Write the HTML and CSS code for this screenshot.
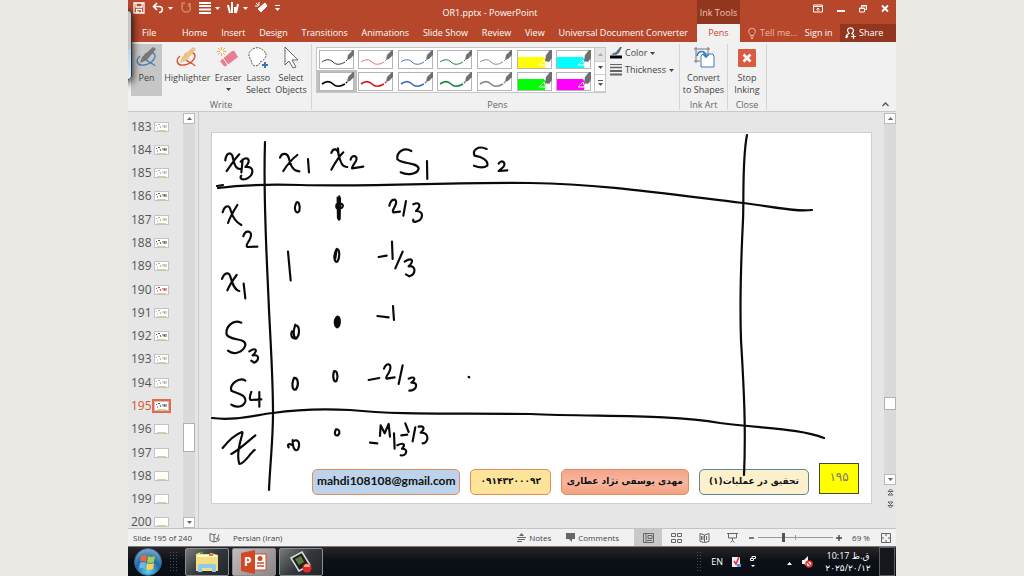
FILE: index.html
```html
<!DOCTYPE html>
<html lang="en">
<head>
<meta charset="utf-8">
<title>OR1.pptx - PowerPoint</title>
<link rel="stylesheet" href="styles.css">
</head>
<body>
<svg class="defs" aria-hidden="true">
  <symbol id="pen" viewBox="0 0 36 19">
    <rect x=".5" y=".5" width="34" height="18" fill="#fff" stroke="#b5b5b5"/>
    <path d="M3 12c4-3 8-3 11 0s7 3 12 0M27 11l1-1" fill="none" stroke="currentColor"/>
    <path d="M28 10l1-5 5-5h1v5l-4 4z" fill="#6f6f6f"/>
  </symbol>
  <symbol id="pen-bold" viewBox="0 0 36 19">
    <rect x=".5" y=".5" width="34" height="18" fill="#fff" stroke="#b5b5b5"/>
    <path d="M3 12c4-3 8-3 11 0s7 3 12 0M27 11l1-1" fill="none" stroke="currentColor" stroke-width="1.6"/>
    <path d="M28 10l1-5 5-5h1v5l-4 4z" fill="#6f6f6f"/>
  </symbol>
  <symbol id="marker" viewBox="0 0 36 19">
    <rect x=".5" y=".5" width="34" height="18" fill="#fff" stroke="#b5b5b5"/>
    <path d="M1 7h26l2 4-1 7H1z" fill="currentColor"/>
    <path d="M28 11l1-6 4-5h2v8l-3 4z" fill="#6f6f6f"/>
    <path d="M22 15l5-5 2 5z" fill="none" stroke="#fff"/>
  </symbol>
  <symbol id="thumb" viewBox="0 0 15 10">
    <rect x=".5" y=".5" width="14" height="9" fill="#fff" stroke="#c3c3c3"/>
    <path d="M3 8.500h9" stroke="#d8d29a" fill="none"/>
  </symbol>
  <symbol id="thumb-ink" viewBox="0 0 15 10">
    <rect x=".5" y=".5" width="14" height="9" fill="#fff" stroke="#c3c3c3"/>
    <path d="M2 3l1 1M4 2.500h2M3 6h1M6 4l1 2M9 3v2M10 6l1-3M12 3v3" stroke="currentColor" fill="none"/>
    <path d="M3 8.500h9" stroke="#d8d29a" fill="none"/>
  </symbol>
  <symbol id="down" viewBox="0 0 5 3"><path d="M0 0h5L2.500 3z" fill="currentColor"/></symbol>
  <symbol id="up" viewBox="0 0 5 3"><path d="M0 3h5L2.500 0z" fill="currentColor"/></symbol>
</svg>

<main class="app">
  <div class="peek"></div>
  <header class="header">
    <div class="titlebar">
      <div class="quick">
        <button aria-label="Save"><svg width="12" height="12" viewBox="0 0 12 12"><path d="M1 1h10v10H1zM3 1v4h6V1M3.500 11V7.500h5V11M5 9v2" fill="none" stroke="#fff" stroke-width="1.300"/></svg></button>
        <button aria-label="Undo"><svg width="12" height="12" viewBox="0 0 12 12"><path d="M5 1L1.500 4.500 5 8M2 4.500h5c5 0 4 6 0 6" fill="none" stroke="#fff" stroke-width="1.600"/></svg><svg class="dd"><use href="#down"/></svg></button>
        <button aria-label="Redo" class="dim"><svg width="12" height="12" viewBox="0 0 12 12"><path d="M3 3a4.300 4.300 0 1 0 5-1M5 1H1.500M2 1v4M9 5V2h2" fill="none" stroke="#d98b76" stroke-width="1.300"/></svg></button>
        <button aria-label="Thickness"><svg width="12" height="12" viewBox="0 0 12 12"><path d="M0 1h12M0 4h12M0 7.500h12M0 11h12" stroke="#fff" stroke-width="1.800"/></svg><svg class="dd"><use href="#down"/></svg></button>
        <button aria-label="Pens"><svg width="12" height="12" viewBox="0 0 12 12"><path d="M1 3l2 8M5 0v11M8 5v6M11 2L9 11" stroke="#fff" stroke-width="2"/></svg><svg class="dd"><use href="#down"/></svg></button>
        <button aria-label="Eraser"><svg width="13" height="12" viewBox="0 0 13 12"><path d="M3 7l7-6 2 3-6 6zM1 1l3 3M4 0v3M0 4h3" fill="#fff" stroke="#fff"/></svg></button>
        <button aria-label="Customize"><svg width="5" height="6" viewBox="0 0 5 6"><path d="M0 .5h5" stroke="#fff"/><path d="M0 3h5L2.500 6z" fill="#fff"/></svg></button>
      </div>
      <h1 class="title">OR1.pptx - PowerPoint</h1>
    </div>
    <div class="inktools">Ink Tools</div>
    <div class="wincontrols">
      <button aria-label="Ribbon display"><svg width="10" height="9" viewBox="0 0 10 9"><path d="M.5 1h9v7h-9zM.5 2.500h9M5 7V4M3.500 5.500L5 4l1.500 1.500" fill="none" stroke="#fff"/></svg></button>
      <button aria-label="Minimize"><svg width="8" height="9" viewBox="0 0 8 9"><path d="M0 7h8" stroke="#fff" stroke-width="2"/></svg></button>
      <button aria-label="Restore"><svg width="8" height="9" viewBox="0 0 8 9"><path d="M.5 4h5v4h-5zM2.500 3.500v-2h5v4h-2M.5 4.500h5M2.500 2h5" fill="none" stroke="#fff"/></svg></button>
      <button aria-label="Close"><svg width="8" height="9" viewBox="0 0 8 9"><path d="M1 1.500l6 6M7 1.500l-6 6" stroke="#fff" stroke-width="1.800"/></svg></button>
    </div>
    <nav class="tabs">
      <a href="#file" class="file">File</a><a href="#home">Home</a><a href="#insert">Insert</a><a href="#design">Design</a><a href="#transitions">Transitions</a><a href="#animations">Animations</a><a href="#slideshow">Slide Show</a><a href="#review">Review</a><a href="#view">View</a><a href="#udc">Universal Document Converter</a>
    </nav>
    <a href="#pens" class="tab-active">Pens</a>
    <div class="account">
      <button class="tell"><svg width="8" height="11" viewBox="0 0 8 11"><path d="M2.500 7.500C2.500 6 .6 5.500.6 3.600a3.400 3.400 0 0 1 6.800 0C7.400 5.500 5.500 6 5.500 7.500zM2.500 9h3M3 10.500h2" fill="none" stroke="#efb5a5"/></svg>Tell me...</button>
      <a href="#signin">Sign in</a>
      <button class="share"><svg width="12" height="12" viewBox="0 0 12 12"><path d="M1 11c0-3 1.500-4 3-4.500C1 3 3 .8 5.500.8S10 4 7 6.500l2 1.500M6 9.500h5M8.500 7v5M1 11l2-2" fill="none" stroke="#fff" stroke-width="1.200"/></svg>Share</button>
    </div>
  </header>

  <section class="ribbon" aria-label="Pens ribbon">
    <div class="group write">
      <div class="tools">
        <button class="tool on"><svg width="22" height="24" viewBox="0 0 22 24"><path d="M4 10c-5 4-3 10 4 9 9-1 14-10 9-12-5-1-10 1-8 5 2 5 9 5 10 8" fill="none" stroke="#4a7fba" stroke-width="1.400"/><path d="M4 17l2-6L17 1l3 2-9 11z" fill="#777"/></svg>Pen</button>
        <button class="tool"><svg width="22" height="24" viewBox="0 0 22 24"><path d="M4 10c-5 4-3 10 4 9 9-1 14-10 9-12-5-1-10 1-8 5 2 5 9 5 10 8" fill="none" stroke="#d9532f" stroke-width="1.400"/><path d="M4 17l2-6L17 1l3 2-9 11z" fill="#ecc386"/></svg>Highlighter</button>
        <button class="tool"><svg width="24" height="24" viewBox="0 0 24 24"><path d="M4 15l12-10q2-1 3 1l3 5-12 9q-2 1-3-1z" fill="#e77f93"/><path d="M7 12l5 7" stroke="#fff"/><path d="M5.500 1v9M1 5.500h9M2 2l7 7M9 2L2 9" stroke="#e9b04b"/><circle cx="5.500" cy="5.500" r="1.500" fill="#fff"/></svg>Eraser<svg class="dd"><use href="#down"/></svg></button>
        <button class="tool"><svg width="22" height="24" viewBox="0 0 22 24"><path d="M6 3q5-3 10 1 5 4 2 8-2 3-5 4-1 4-5 4c-4-1-3-4-4-6Q-1 7 6 3z" fill="#fff" stroke="#555" stroke-dasharray="2 1"/><path d="M18 16v6M15 19h6" stroke="#3f75b5" stroke-width="2"/></svg>Lasso<br>Select</button>
        <button class="tool"><svg width="22" height="24" viewBox="0 0 22 24"><path d="M5 1v18l4-4 4 7 3-1-4-7h6z" fill="#fff" stroke="#666"/></svg>Select<br>Objects</button>
      </div>
      <div class="caption">Write</div>
    </div>
    <div class="group pens">
      <div class="tools">
        <div class="gallery">
          <div class="cells">
            <button aria-label="Black pen"><svg class="c-ink"><use href="#pen"/></svg></button>
            <button aria-label="Red pen"><svg class="c-rose"><use href="#pen"/></svg></button>
            <button aria-label="Blue pen"><svg class="c-blue"><use href="#pen"/></svg></button>
            <button aria-label="Green pen"><svg class="c-green"><use href="#pen"/></svg></button>
            <button aria-label="Gray pen"><svg class="c-gray"><use href="#pen"/></svg></button>
            <button aria-label="Yellow highlighter"><svg class="c-yellow"><use href="#marker"/></svg></button>
            <button aria-label="Cyan highlighter"><svg class="c-cyan"><use href="#marker"/></svg></button>
            <button aria-label="Bold black pen" class="chosen"><svg class="c-black"><use href="#pen-bold"/></svg></button>
            <button aria-label="Bold red pen"><svg class="c-red"><use href="#pen-bold"/></svg></button>
            <button aria-label="Bold blue pen"><svg class="c-blue"><use href="#pen-bold"/></svg></button>
            <button aria-label="Bold green pen"><svg class="c-green"><use href="#pen-bold"/></svg></button>
            <button aria-label="Bold gray pen"><svg class="c-gray"><use href="#pen-bold"/></svg></button>
            <button aria-label="Green highlighter"><svg class="c-lime"><use href="#marker"/></svg></button>
            <button aria-label="Magenta highlighter"><svg class="c-magenta"><use href="#marker"/></svg></button>
          </div>
          <div class="spin">
            <button aria-label="Previous row" class="off"><svg class="dd"><use href="#up"/></svg></button>
            <button aria-label="Next row"><svg class="dd"><use href="#down"/></svg></button>
            <button aria-label="More pens"><svg width="5" height="6" viewBox="0 0 5 6"><path d="M0 .5h5" stroke="#555"/><path d="M0 3h5L2.500 6z" fill="#555"/></svg></button>
          </div>
        </div>
        <div class="options">
          <button><svg width="12" height="12" viewBox="0 0 12 12"><path d="M2 7l4-2 4-5h2L9 6 6 8z" fill="#5d6f80"/><path d="M1 7l4-1-1 2z" fill="#3c7bc0"/><path d="M0 10h12" stroke="#000" stroke-width="3"/></svg>Color<svg class="dd"><use href="#down"/></svg></button>
          <button><svg width="12" height="12" viewBox="0 0 12 12"><path d="M0 .5h12" stroke="#666"/><path d="M0 3.500h12" stroke="#666" stroke-width="1.500"/><path d="M0 7h12M0 10.500h12" stroke="#666" stroke-width="2.200"/></svg>Thickness<svg class="dd"><use href="#down"/></svg></button>
        </div>
      </div>
      <div class="caption">Pens</div>
    </div>
    <div class="group art">
      <div class="tools">
        <button class="tool"><svg width="22" height="24" viewBox="0 0 22 24"><path d="M3 1v16M1 3h16M15 1v6M1 15h6" stroke="#777" fill="none"/><path d="M10 8h10l1 3v10H8V10z" fill="#fff" stroke="#3c7bc0"/><path d="M4 10c1-6 8-6 9 0M10 8l3 3 3-3" fill="none" stroke="#3c7bc0" stroke-width="1.600"/></svg>Convert<br>to Shapes</button>
      </div>
      <div class="caption">Ink Art</div>
    </div>
    <div class="group close">
      <div class="tools">
        <button class="tool"><svg width="22" height="24" viewBox="0 0 22 24"><rect x="2" y="3" width="18" height="18" rx="1" fill="#dc5b40"/><path d="M7.500 8.500l7 7M14.500 8.500l-7 7" stroke="#fff" stroke-width="2.600"/></svg>Stop<br>Inking</button>
      </div>
      <div class="caption">Close</div>
    </div>
    <button class="collapse" aria-label="Collapse ribbon"><svg width="7" height="5" viewBox="0 0 7 5"><path d="M.5 4l3-3 3 3" fill="none" stroke="#555" stroke-width="1.400"/></svg></button>
  </section>

  <section class="workspace">
    <div class="outline">
      <ol class="thumbs">
        <li>183<svg><use href="#thumb-ink"/></svg></li>
        <li>184<svg class="dark"><use href="#thumb-ink"/></svg></li>
        <li>185<svg><use href="#thumb-ink"/></svg></li>
        <li>186<svg class="dark"><use href="#thumb-ink"/></svg></li>
        <li>187<svg><use href="#thumb-ink"/></svg></li>
        <li>188<svg class="dark"><use href="#thumb-ink"/></svg></li>
        <li>189<svg><use href="#thumb-ink"/></svg></li>
        <li>190<svg class="warm"><use href="#thumb-ink"/></svg></li>
        <li>191<svg><use href="#thumb-ink"/></svg></li>
        <li>192<svg class="dark"><use href="#thumb-ink"/></svg></li>
        <li>193<svg><use href="#thumb-ink"/></svg></li>
        <li>194<svg><use href="#thumb-ink"/></svg></li>
        <li class="current">195<svg class="dark"><use href="#thumb-ink"/></svg></li>
        <li>196<svg><use href="#thumb"/></svg></li>
        <li>197<svg><use href="#thumb"/></svg></li>
        <li>198<svg><use href="#thumb"/></svg></li>
        <li>199<svg><use href="#thumb"/></svg></li>
        <li>200<svg><use href="#thumb"/></svg></li>
      </ol>
    </div>
    <div class="scroll">
      <button aria-label="Scroll up"><svg class="dd"><use href="#up"/></svg></button>
      <div class="track"><span class="above-list"></span><span class="handle tall"></span></div>
      <button aria-label="Scroll down"><svg class="dd"><use href="#down"/></svg></button>
    </div>
    <div class="stage">
      <article class="slide">
        <footer class="labels">
          <span class="pill mail">mahdi108108@gmail.com</span>
          <span class="pill phone" lang="fa">۰۹۱۴۳۲۰۰۰۹۲</span>
          <span class="pill author" lang="fa" dir="rtl">مهدی یوسفی نژاد عطاری</span>
          <span class="pill course" lang="fa" dir="rtl">تحقیق در عملیات(۱)</span>
          <span class="number" lang="fa">۱۹۵</span>
        </footer>
        <svg class="ink" viewBox="211 132 661 372" role="img" aria-label="Handwritten simplex table">
          <g stroke-width="2.200">
            <path d="M265 142C263 200 267 260 269 310C271 350 273 380 273 413C273 440 270 465 269 490"/>
            <path d="M217 186l6-1M218 188C240 185 262 184 300 185C380 187 450 182 530 183C600 184 660 193 743 203C775 207 795 212 812 210"/>
            <path d="M747 135C742 160 744 200 743 220C741 260 740 310 741 340C744 390 746 430 744 475"/>
            <path d="M212 418C235 421 255 415 273 413C300 409 330 409 350 410C400 415 450 413 530 414C600 417 670 414 720 423C770 429 800 429 824 438"/>
          </g>
          <g transform="translate(200 125) scale(.3333)" stroke-width="6.500">
            <path d="M76 106C78 84 92 80 97 92C102 110 104 134 122 132M118 88C106 100 92 122 80 138"/>
            <path d="M128 104L124 142M122 110C140 88 158 106 136 126C166 122 162 152 138 162C124 166 118 158 124 152"/>
            <path d="M240 98C246 82 262 84 266 98C272 118 276 138 298 139M292 90C276 102 260 122 250 138M324 102L327 142"/>
            <path d="M394 84C400 66 414 72 416 88C420 110 426 128 442 126M430 82C416 96 404 116 394 134M414 70L416 92M452 104C454 88 476 90 468 108C462 118 454 128 456 130L490 125"/>
            <path d="M634 78C612 66 590 80 592 102C600 118 656 110 656 132C650 148 622 152 602 142M681 108L682 162"/>
            <path d="M860 72C834 60 816 76 824 92C846 96 866 106 862 122C848 132 832 126 822 122M896 116C906 100 920 116 910 126L896 138L922 136"/>
            <path d="M68 262C74 240 88 238 92 256C98 278 108 292 124 300M112 240C102 256 90 276 84 294M130 334C136 312 158 318 152 336C148 352 134 360 142 366L172 365"/>
            <path d="M290 232C278 254 290 270 298 258C302 238 294 228 290 232M418 214L417 284"/>
            <path d="M413 218L414 280M420 220L419 282M410 238C406 250 414 256 426 248C432 240 426 232 412 238"/>
            <path d="M568 242C574 218 592 220 588 236C584 250 574 258 580 262L600 260M618 228L610 272M640 238C658 230 666 240 648 258C676 258 668 286 648 290C640 292 638 288 640 284"/>
            <path d="M264 380L272 466M410 372C398 394 404 414 412 410C420 398 420 372 410 372L406 400"/>
            <path d="M536 396L560 392M576 350L578 402M608 380L586 430M614 410C636 396 644 406 626 424C650 420 648 448 628 454L618 448"/>
            <path d="M66 462C74 440 88 440 92 458C98 478 104 496 118 498M110 450C98 466 88 482 82 496M131 476L136 520"/>
          </g>
          <g transform="translate(200 300) scale(.3333)" stroke-width="6.500">
            <path d="M124 68C98 56 76 82 80 104C92 124 138 112 136 136C130 158 100 166 84 152M148 154C166 142 176 150 158 166C180 162 178 182 162 188L154 182"/>
            <path d="M286 74C280 92 278 108 288 116C300 106 300 78 288 76M276 94C270 106 276 116 288 116M412 50C400 60 404 80 412 82C422 76 422 52 412 50L408 74M414 54L412 78"/>
            <path d="M532 48L566 52M579 18L582 60"/>
            <path d="M136 242C118 230 88 252 94 272C110 280 140 284 136 304C130 322 108 324 94 314M154 276C148 292 148 300 154 300L184 298M178 276L178 320"/>
            <path d="M282 234C272 258 280 274 288 268C298 254 294 232 282 234M402 214C396 236 404 250 410 242C416 226 410 210 402 214"/>
            <path d="M506 240L538 234M552 206C560 186 576 190 570 210C566 224 554 232 560 236L584 232M608 196L596 252M626 236C646 228 648 238 634 248C658 246 650 272 628 272"/>
            <path d="M806 231L808 232M68 444C84 424 104 404 126 396C134 396 104 450 118 492C134 492 148 462 164 450M94 462C120 448 144 424 166 406"/>
            <path d="M278 420C278 446 286 456 294 448C302 430 294 414 280 424M278 436C264 428 262 436 266 442M408 388C402 400 404 408 414 406C422 398 418 386 408 388"/>
            <path d="M510 428L532 430M540 408L542 376L554 400L566 372L570 410M582 400L584 446M592 436C612 426 618 434 606 446C628 446 618 470 602 466M604 406L622 404M616 370L626 396M646 382L638 424M656 380C672 376 676 386 662 398C690 396 686 430 668 430"/>
          </g>
        </svg>
      </article>
    </div>
    <div class="scroll right">
      <button aria-label="Scroll up"><svg class="dd"><use href="#up"/></svg></button>
      <div class="track"><span class="above-slide"></span><span class="handle"></span></div>
      <button aria-label="Scroll down"><svg class="dd"><use href="#down"/></svg></button>
      <button class="jump" aria-label="Previous slide"><svg width="7" height="8" viewBox="0 0 7 8"><path d="M1 3.500L3.500 1 6 3.500zM1 7l2.500-2.500L6 7z" stroke="#666" fill="none"/></svg></button>
      <button class="jump" aria-label="Next slide"><svg width="7" height="8" viewBox="0 0 7 8"><path d="M1 1l2.500 2.500L6 1zM1 4.500L3.500 7 6 4.500z" stroke="#666" fill="none"/></svg></button>
    </div>
  </section>

  <footer class="status">
    <span>Slide 195 of 240</span>
    <button class="proof" aria-label="Spelling"><svg width="11" height="10" viewBox="0 0 11 10"><path d="M5 2L1 .5v7L5 9l5-1.500V5M5 2v7M5 2l2-1M6.500 4.500l1.500 2 2-5" fill="none" stroke="#666"/></svg></button>
    <span>Persian (Iran)</span>
    <div class="right-tools">
      <button class="notes"><svg width="9" height="9" viewBox="0 0 9 9"><path d="M0 4.500h9M1 6.500h7M0 8.500h5" stroke="#666"/><path d="M2 3h5L4.500 0z" fill="#666"/></svg>Notes</button>
      <button class="comments"><svg width="9" height="9" viewBox="0 0 9 9"><path d="M0 0h9v6H6v3L3 6H0z" fill="#666"/></svg>Comments</button>
      <div class="views">
        <button class="on" aria-label="Normal"><svg width="11" height="10" viewBox="0 0 11 10"><path d="M.5.5h10v9H.5zM3 .5v9M5 2.500h4v3H5zM4 7.500h5" fill="none" stroke="#666"/></svg></button>
        <button aria-label="Slide sorter"><svg width="11" height="10" viewBox="0 0 11 10"><path d="M.5.5h4v3h-4zM6.500.5h4v3h-4zM.5 6.500h4v3h-4zM6.500 6.500h4v3h-4z" fill="none" stroke="#666"/></svg></button>
        <button aria-label="Reading view"><svg width="11" height="10" viewBox="0 0 11 10"><path d="M5.500 2L1 .5v8l4.500 1 4.500-1v-8zM5.500 2v7M2.500 3v4M4 3v4M7.500 3v4" fill="none" stroke="#666"/></svg></button>
        <button aria-label="Slide show"><svg width="11" height="10" viewBox="0 0 11 10"><path d="M0 .5h11M1.500 1v4h8V1M5.500 5v3M3.500 9.500l2-2 2 2" fill="none" stroke="#666"/></svg></button>
      </div>
      <button class="step" aria-label="Zoom out"><svg width="6" height="6" viewBox="0 0 6 6"><path d="M0 3h5" stroke="#444" stroke-width="1.400"/></svg></button>
      <input type="range" class="zoom" min="0" max="100" value="33" aria-label="Zoom">
      <button class="step" aria-label="Zoom in"><svg width="6" height="6" viewBox="0 0 6 6"><path d="M0 3h6M3 0v6" stroke="#444" stroke-width="1.400"/></svg></button>
      <span class="percent">69 %</span>
      <button class="fit" aria-label="Fit slide"><svg width="10" height="10" viewBox="0 0 10 10"><path d="M.5.5h9v9h-9zM5 0v3M5 7v3M0 5h3M7 5h3" fill="none" stroke="#666"/></svg></button>
    </div>
  </footer>

  <footer class="taskbar">
    <button class="start" aria-label="Start"><svg width="28" height="28" viewBox="0 0 28 28"><defs><radialGradient id="orb" cx=".5" cy=".85" r=".9"><stop offset="0" stop-color="#5fd0f5"/><stop offset=".5" stop-color="#1e6aa8"/><stop offset="1" stop-color="#8fb7d0"/></radialGradient></defs><circle cx="14" cy="14" r="13.500" fill="url(#orb)" stroke="#35607c"/><path d="M7 8q3-2 6 0l-1 6q-3-2-6 0z" fill="#f0653a"/><path d="M14 8q3 2 7 0l-1 6q-4 2-7 0z" fill="#a5cf4c"/><path d="M6 15q3-2 6 0l-1 6q-3-2-6 0z" fill="#6db5ea"/><path d="M13 15q3 2 7 0l-1 6q-4 2-7 0z" fill="#fbd34e"/></svg></button>
    <span class="grip"></span>
    <button class="task" aria-label="Explorer"><svg width="26" height="22" viewBox="0 0 26 22"><path d="M2 3l5-2 2 2h6l2-1 7 2v16H2z" fill="#f3dd83"/><path d="M3 5h20" stroke="#fff6c8" stroke-width="2"/><path d="M6 2h3" stroke="#4aa04a" stroke-width="2"/><path d="M15 4h4" stroke="#d66" stroke-width="2"/><path d="M4 21v-6q0-2 2-2h14q2 0 2 2v6h-4v-4H8v4z" fill="#8cc8ef"/></svg></button>
    <button class="task lit" aria-label="PowerPoint"><svg width="28" height="24" viewBox="0 0 28 24"><path d="M13 4h13v16H13z" fill="#fff" stroke="#d24726"/><path d="M17 13h7M17 16h7" stroke="#d24726" stroke-width="1.500"/><circle cx="20" cy="8.500" r="2.500" fill="#d24726"/><path d="M1 3l14-3v24L1 21z" fill="#d24726"/><text x="4" y="16" class="ppt">P</text></svg></button>
    <button class="task" aria-label="Screen recorder"><svg width="24" height="24" viewBox="0 0 24 24"><path d="M2 8l11-6 8 13-11 6z" fill="#222" stroke="#ddd" stroke-width="1.500"/><path d="M6 9l6-3 3 6-5 3z" fill="#557a3c"/><circle cx="18" cy="18" r="4.500" fill="#e02a20"/><path d="M15 17a3 3 0 0 1 6 0z" fill="#f4a8a0"/></svg></button>
    <div class="tray">
      <span class="grip"></span>
      <span class="lang">EN</span>
      <svg width="9" height="11" viewBox="0 0 9 11"><path d="M0 1h8v10H0z" fill="#eaf0f8"/><path d="M5 8h4v3H5z" fill="#5b8fd0"/><path d="M2 5l2 3 3-7" fill="none" stroke="#d33" stroke-width="1.600"/></svg>
      <svg width="6" height="12" viewBox="0 0 6 12"><path d="M.5 2.500h3v2h-3zM2 2V.5h3.500v2H4" fill="none" stroke="#fff"/><path d="M1 9h4l-2 2z" fill="#fff"/></svg>
      <svg class="tray-up" width="5" height="3"><use href="#up"/></svg>
      <svg width="12" height="12" viewBox="0 0 12 12"><path d="M1 4h2l4-4v11L3 8H1z" fill="#eee"/><circle cx="8" cy="8" r="3" fill="#fff" stroke="#e0302a" stroke-width="1.500"/><path d="M6 6l4 4" stroke="#e0302a" stroke-width="1.500"/></svg>
      <div class="clock"><span>10:17 ق.ظ</span><span>۲۰۲۵/۲۰/۱۲</span></div>
      <button class="desktop" aria-label="Show desktop"></button>
    </div>
  </footer>
</main>
</body>
</html>
```
FILE: styles.css
```css
* { box-sizing: border-box; }
body {
  margin: 0;
  height: 100vh;
  padding: 0 12.5%;
  background: #eae9e4;
  color: #444;
  font: 9px/12px "Open Sans", "Noto Sans", "DejaVu Sans", sans-serif;
  overflow: hidden;
}
button { border: 0; padding: 0; margin: 0; background: none; color: inherit; font: inherit; }
a { color: inherit; text-decoration: none; }
svg { flex: none; }
.defs { position: absolute; width: 0; height: 0; }
.dd { width: 5px; height: 3px; }

.app { position: relative; height: 100%; display: flex; flex-direction: column; overflow: hidden; background: #e6e6e6; }
.peek {
  position: absolute; left: -8px; top: 10px; width: 12px; height: 70px; z-index: 2;
  border: 1px solid #333; border-radius: 4px;
  background: linear-gradient(#c9c4c6 55%, #b5d9f0 56%, #dff0fa);
  box-shadow: 0 2px 8px #000;
}

.header { display: grid; grid-template: 24px 18px / 569fr 43fr 156fr; background: #b7472a; color: #fff; }
.titlebar { display: grid; grid-template-columns: 1fr 1fr; align-items: center; }
.quick { display: flex; align-items: center; gap: 7px; height: 16px; padding-left: 5px; align-self: start; }
.quick button { display: flex; align-items: center; gap: 4px; }
.title { margin: 0; padding: 2px 0 0 30px; font-size: 9px; font-weight: 400; }
.inktools { display: grid; place-items: center; padding-top: 2px; background: #933620; color: #f3c4b6; white-space: nowrap; }
.wincontrols { display: flex; justify-content: flex-end; align-items: center; gap: 14px; height: 17px; padding-right: 7px; }
.wincontrols button { display: flex; }
.tabs { display: flex; justify-content: space-between; align-items: center; padding: 0 9px 0 14px; white-space: nowrap; }
.file { margin-right: 12px; }
.tab-active { display: grid; place-items: center; background: #f1f1f1; color: #c8452a; }
.account { display: flex; align-items: center; justify-content: space-between; padding-left: 8px; white-space: nowrap; }
.tell { display: flex; align-items: center; gap: 4px; color: #efb5a5; }
.share { display: flex; align-items: center; gap: 2px; height: 18px; width: 56px; padding-left: 5px; background: #933620; }

.ribbon { display: flex; height: 70px; background: #f1f1f1; border-bottom: 1px solid #c9c9c9; }
.group { display: flex; flex-direction: column; justify-content: space-between; margin: 2px 0 1px; border-right: 1px solid #d4d4d4; }
.write { width: 184px; padding-left: 3px; }
.pens { width: 368px; padding-left: 4px; }
.art { width: 48px; }
.close { width: 39px; }
.tools { display: flex; gap: 4px; }
.caption { text-align: center; color: #666; line-height: 11px; }
.tool { display: flex; flex-direction: column; align-items: center; flex: auto; height: 52px; white-space: nowrap; }
.tool svg:first-child { margin: 2px 0; }
.tool .dd { margin-top: 4px; }
.write .tools { gap: 0; padding-right: 2px; }
.tool.on { background: #c6c6c6; min-width: 31px; }
.gallery { display: flex; width: 290px; margin-top: 3px; border: 1px solid #c6c6c6; background: #fff; }
.cells { display: grid; grid-template-columns: repeat(7, 1fr); flex: 1; }
.cells button { display: grid; place-items: center; height: 22px; }
.cells svg { width: 36px; height: 19px; }
.cells .chosen { background: #c0c0c0; }
.spin { display: grid; width: 11px; border-left: 1px solid #c6c6c6; }
.spin button { display: grid; place-items: center; border-bottom: 1px solid #d0d0d0; }
.spin .off { background: #e4e4e4; color: #aaa; }
.options { display: flex; flex-direction: column; gap: 5px; padding-top: 3px; }
.options button { display: flex; align-items: center; gap: 3px; }
.collapse { margin: auto 7px 4px auto; display: flex; }
.c-ink { color: #333; } .c-black { color: #000; } .c-rose { color: #ee6a70; } .c-red { color: #d8131f; }
.c-blue { color: #3c6fbf; } .c-green { color: #17803d; } .c-gray { color: #888; }
.c-yellow { color: #ff0; } .c-cyan { color: #0ff; } .c-lime { color: #0f0; } .c-magenta { color: #f0f; }

.workspace { flex: 1; min-height: 0; display: flex; border-bottom: 1px solid #c4c4c4; }
.outline { width: 55px; overflow: hidden; }
.thumbs { display: grid; grid-auto-rows: 1fr; height: calc(100% + 6px); margin: 0; padding: 3px 0 0 3px; list-style: none; font-size: 12px; line-height: 12px; color: #555; }
.thumbs li { display: flex; align-items: center; gap: 2px; }
.thumbs svg { width: 15px; height: 10px; color: #aaa; }
.thumbs .dark { color: #555; }
.thumbs .warm { color: #c43b3b; }
.thumbs .current { color: #d9532f; }
.current svg { outline: 2px solid #e8694a; }
.scroll { display: flex; flex-direction: column; width: 12px; padding-top: 1px; }
.scroll button { display: grid; place-items: center; height: 11px; border: 1px solid #b9b9b9; background: #fff; color: #666; }
.track { flex: 1; display: flex; flex-direction: column; background: #dadada; }
.handle { height: 13px; border: 1px solid #b0b0b0; background: #fff; }
.handle.tall { height: 29px; }
.above-list { flex: 0 1 76%; }
.above-slide { flex: 0 1 78%; }
.scroll .jump { height: 13px; border: 0; background: none; }
.right { padding-bottom: 17px; }
.stage { flex: 1; display: grid; margin-left: 3px; padding: 20px 12px 24px 12px; border-left: 1px solid #cbcbcb; }
.slide { position: relative; display: flex; flex-direction: column; justify-content: flex-end; background: #fff; border: 1px solid #cfcfcf; }
.ink { position: absolute; inset: -1px; width: calc(100% + 2px); height: calc(100% + 2px); fill: none; stroke: #0a0a0a; stroke-linecap: round; stroke-linejoin: round; }
.labels { display: grid; grid-template-columns: 149fr 81fr 128fr 111fr 40fr; gap: 10px; padding: 0 12px 8px 100px; align-items: end; white-space: nowrap; }
.pill { min-width: 0; height: 26px; border: 1px solid #df8d5c; border-radius: 5px; display: grid; place-content: center; padding-bottom: 2px; color: #111; font: bold 9px/20px "DejaVu Sans", sans-serif; }
.mail { background: #bdd3ec; font: bold 12px/20px Lato, sans-serif; }
.phone { background: #fde49a; }
.author { background: linear-gradient(#f4a48c, #f9b59f 50%, #f4a182); }
.course { background: #fdf0cd; border-color: #5d8593; }
.number { display: grid; place-items: center; height: 31px; margin-bottom: 1px; padding-bottom: 4px; border: 1px solid #444; background: #ff0; color: #777; font: 12px/16px "DejaVu Sans", sans-serif; }

.status { display: flex; align-items: center; height: 17px; padding-left: 5px; background: #f1f1f1; font-size: 8px; white-space: nowrap; }
.proof { display: flex; margin: 0 13px 0 17px; }
.right-tools { display: flex; align-items: center; margin-left: auto; height: 100%; padding-right: 5px; }
.notes, .comments { display: flex; align-items: center; gap: 3px; margin-right: 15px; }
.views { display: flex; height: 100%; }
.views button { display: grid; place-items: center; width: 28px; }
.views .on { background: #c9c9c9; }
.step { display: grid; place-items: center; width: 12px; }
.zoom { appearance: none; width: 75px; height: 10px; margin: 0; background: linear-gradient(#999, #999) center / 100% 1px no-repeat, linear-gradient(#999, #999) center / 1px 5px no-repeat; }
.zoom::-webkit-slider-thumb { appearance: none; width: 3px; height: 9px; background: #555; }
.percent { width: 36px; padding-right: 4px; text-align: center; }
.fit { display: flex; }

.taskbar { display: flex; align-items: center; height: 30px; border-top: 1px solid #77797c; background: linear-gradient(#2a2526, #0c1118 45%, #090e14); color: #fff; }
.start { display: flex; margin: 0 7px 0 6px; }
.grip { width: 8px; height: 22px; background: radial-gradient(#4b5054 1px, transparent 1px) 0 0 / 3px 3px; }
.task { display: grid; place-items: center; width: 44px; height: 28px; margin-left: 3px; border: 1px solid #8b8d90; border-radius: 2px; background: linear-gradient(135deg, #77797b, #34373b 50%, #222529); }
.grip + .task { margin-left: 8px; }
.task.lit { background: linear-gradient(135deg, #c4bcbc, #8b8585); }
.ppt { font: bold 12px "Open Sans", sans-serif; fill: #fff; }
.tray { display: flex; align-items: center; height: 100%; margin-left: auto; gap: 9px; }
.tray .grip { width: 6px; }
.tray .lang { font-size: 9px; }
.tray-up { margin: 4px 0 0 22px; }
.clock { display: flex; flex-direction: column; align-items: center; width: 52px; margin-right: -4px; font-size: 9px; line-height: 12px; white-space: nowrap; }
.desktop { width: 16px; height: 29px; margin: 0 1px 0 0; border: 1px solid #5c6064; background: #14181d; }
```
